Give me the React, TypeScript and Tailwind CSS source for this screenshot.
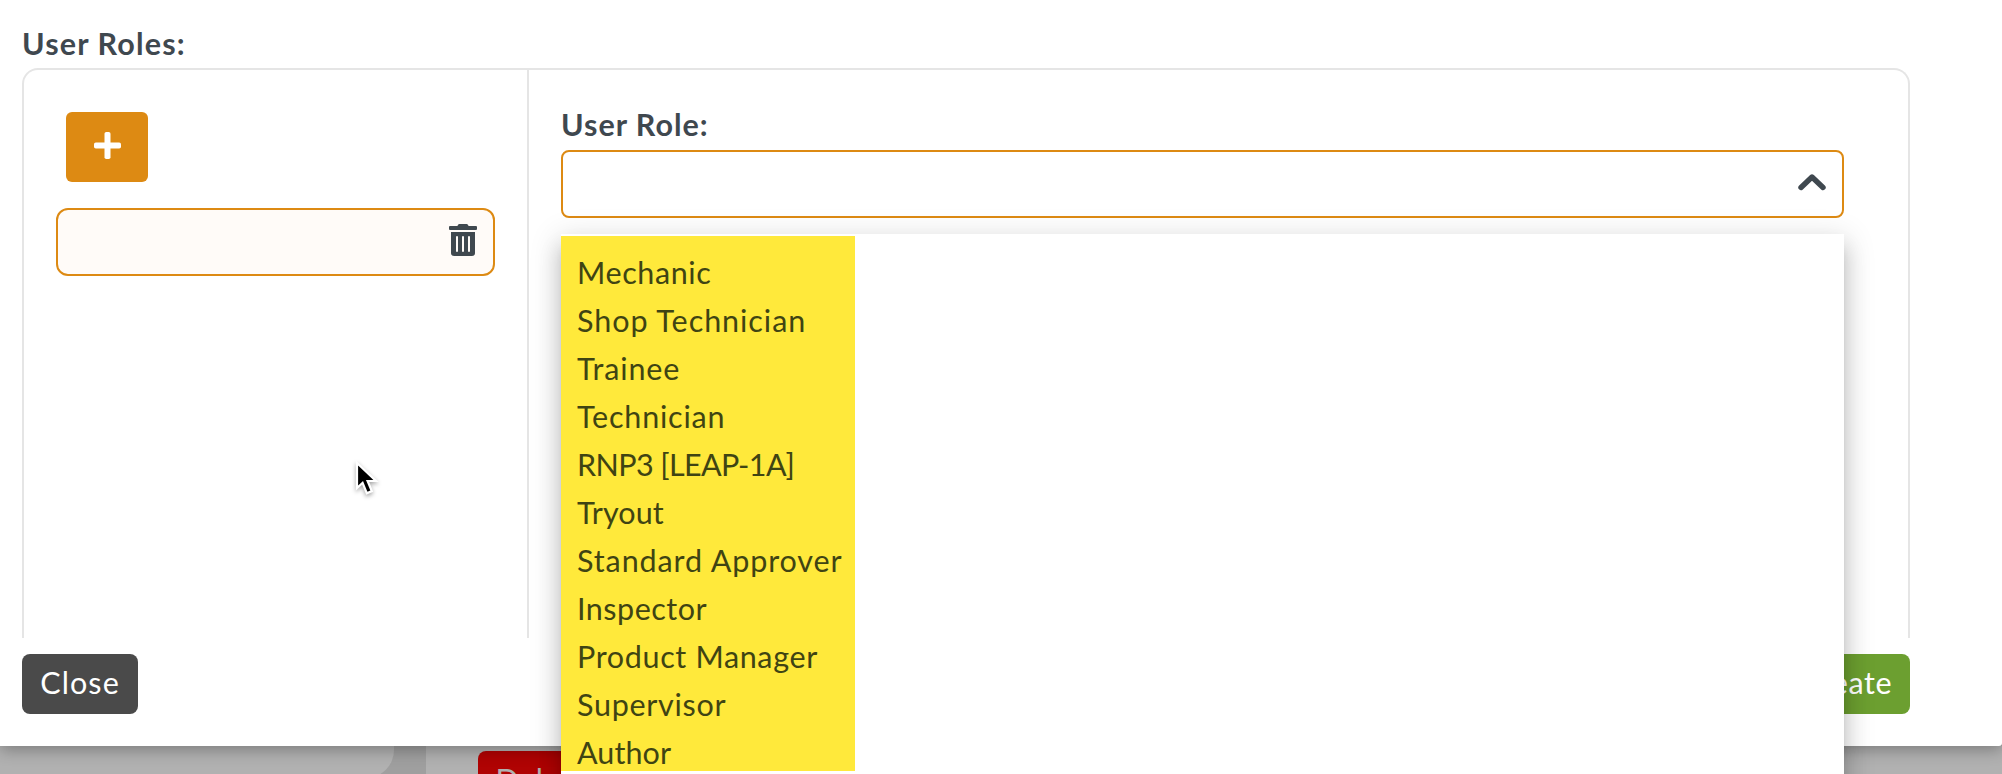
import clsx from "clsx";

const ROLES = [
  { name: "Mechanic", tracking: "tracking-[0.6px]" },
  { name: "Shop Technician", tracking: "tracking-[0.95px]" },
  { name: "Trainee", tracking: "tracking-[0.85px]" },
  { name: "Technician", tracking: "tracking-[0.8px]" },
  { name: "RNP3 [LEAP-1A]", tracking: "tracking-[-0.6px]" },
  { name: "Tryout", tracking: "tracking-[0.1px]" },
  { name: "Standard Approver", tracking: "tracking-[0.9px]" },
  { name: "Inspector", tracking: "tracking-[0.5px]" },
  { name: "Product Manager", tracking: "tracking-[0.65px]" },
  { name: "Supervisor", tracking: "tracking-[0.7px]" },
  { name: "Author", tracking: "tracking-[0.1px]" },
];

function PlusIcon() {
  return (
    <svg width="27" height="27" viewBox="0 0 27 27" fill="#fff">
      <rect x="10.5" y="0" width="6" height="27" rx="1.8" />
      <rect x="0" y="10.5" width="27" height="6" rx="1.8" />
    </svg>
  );
}

function TrashIcon() {
  return (
    <svg width="28" height="32" viewBox="0 0 28 32" fill="none">
      <path
        d="M1 2h7.4l.7-1.3Q9.5 0 10.4 0h7.2q.9 0 1.3.7L19.6 2H27q1 0 1 1v2q0 1-1 1H1Q0 6 0 5V3q0-1 1-1Z"
        fill="#3f484f"
      />
      <path d="M2 8h24v21q0 3-3 3H5q-3 0-3-3Z" fill="#3f484f" />
      <path
        d="M8 13v14M14 13v14M20 13v14"
        stroke="#fffbf8"
        strokeWidth="2"
        strokeLinecap="round"
      />
    </svg>
  );
}

function ChevronUpIcon() {
  return (
    <svg width="28" height="17" viewBox="0 0 28 17" fill="none">
      <path
        d="M3 13.5 14 3l11 10.5"
        stroke="#3f484f"
        strokeWidth="5.4"
        strokeLinecap="round"
        strokeLinejoin="round"
      />
    </svg>
  );
}

function Cursor() {
  return (
    <svg
      className="absolute top-[460px] left-[353px] drop-shadow-[0_2px_2px_rgba(0,0,0,0.35)]"
      width="28"
      height="38"
      viewBox="0 0 28 38"
    >
      <path
        d="M4 3v25l5.6-5.2 4.2 10.4 5-2.1-4.2-10.1H23Z"
        fill="#000"
        stroke="#fff"
        strokeWidth="2.2"
      />
    </svg>
  );
}

function RoleList() {
  return (
    <aside className="w-[505px] shrink-0 border-r-2 border-[#e5e5e5] pt-[42px] pl-8">
      <button className="ml-[10px] flex h-[70px] w-[82px] items-center justify-center rounded-md bg-[#dd8a13] pb-[3px]">
        <PlusIcon />
      </button>
      <div className="mt-[26px] flex h-[68px] w-[439px] justify-end rounded-xl border-2 border-[#dd8a13] bg-[#fffbf8] pt-[14px] pr-4">
        <TrashIcon />
      </div>
    </aside>
  );
}

function RoleMenu() {
  return (
    <div className="absolute top-[84px] left-0 z-10 h-[600px] w-full bg-white pt-0.5 shadow-[0_10px_10px_-6px_rgba(0,0,0,0.2),0_16px_20px_2px_rgba(0,0,0,0.14),0_6px_28px_4px_rgba(0,0,0,0.12)]">
      <ul className="h-[535px] w-[294px] bg-[#ffe93b] pt-3 pl-4 text-[#3f4413]">
        {ROLES.map(({ name, tracking }) => (
          <li key={name} className={clsx("h-12 leading-[48px] whitespace-nowrap", tracking)}>
            {name}
          </li>
        ))}
      </ul>
    </div>
  );
}

export default function App() {
  return (
    <div className="relative h-[774px] w-[2002px] overflow-hidden bg-[#9f9f9f] font-[Lato,sans-serif] text-[30.5px]">
      <main className="relative z-10 flex h-[746px] flex-col rounded-br-[3px] bg-white pr-[92px] pl-[22px] shadow-[0_4px_16px_rgba(0,0,0,0.3)]">
        <h2 className="h-[68px] pt-[19px] leading-[48px] font-bold tracking-[1.15px] text-[#3f484f]">
          User Roles:
        </h2>

        <section className="flex h-[570px] rounded-t-2xl border-2 border-b-0 border-[#e5e5e5]">
          <RoleList />
          <div className="pt-[30px] pl-8">
            <label className="block h-[50px] leading-[48px] font-bold tracking-[1px] text-[#3f484f]">
              User Role:
            </label>
            <div className="relative">
              <div className="flex h-[68px] w-[1283px] justify-end rounded-lg border-2 border-[#dd8a13] pt-[22px] pr-4">
                <ChevronUpIcon />
              </div>
              <RoleMenu />
            </div>
          </div>
        </section>

        <footer className="mt-4 flex justify-between text-white">
          <button className="h-[60px] w-[116px] rounded-lg bg-[#4a4a4a] pb-[3px] tracking-[1.1px]">
            Close
          </button>
          <button className="h-[60px] w-[126px] rounded-lg bg-[#6c9f30] pr-0.5 pb-[3px] tracking-[0.6px]">
            Create
          </button>
        </footer>
      </main>

      <div className="flex h-8 gap-8">
        <div className="w-[394px] rounded-br-[28px] bg-[#b1b1b1]" />
        <div className="flex-1 bg-[#b1b1b1] pt-[5px] pl-[52px]">
          <button className="h-[60px] w-[128px] rounded-lg bg-[#b00303] pb-[3px] tracking-[0.6px] text-[#b1b1b1]">
            Delete
          </button>
        </div>
      </div>
      <div className="absolute inset-0 z-20">
        <Cursor />
      </div>
    </div>
  );
}
